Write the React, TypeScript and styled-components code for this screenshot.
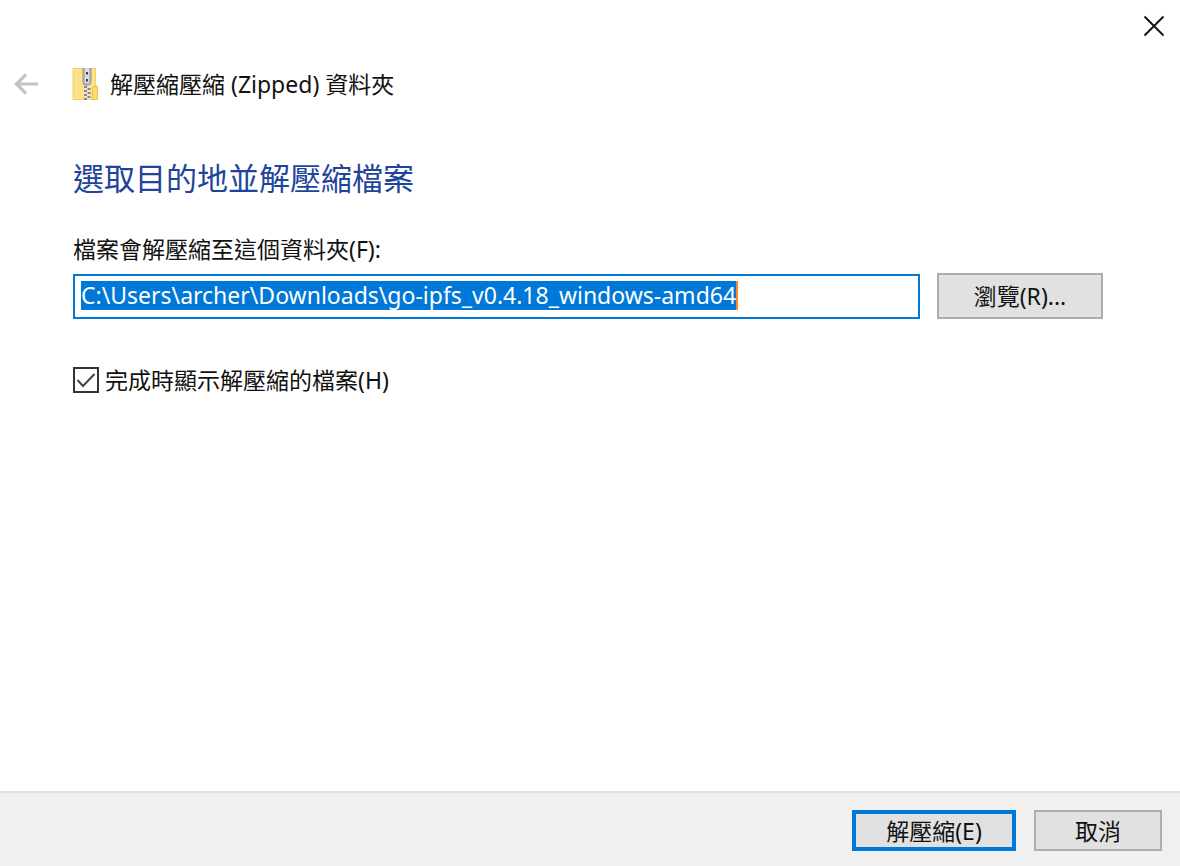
import React, { useEffect, useRef, useState } from "react";
import styled, { createGlobalStyle } from "styled-components";

const GlobalStyle = createGlobalStyle`
  *, *::before, *::after { box-sizing: border-box; }
  body {
    margin: 0;
    background: #fff;
    color: #111;
    font-family: "Noto Sans", "Noto Sans CJK TC", sans-serif;
    font-size: 23px;
    line-height: 30px;
  }
  button, input { font: inherit; color: inherit; }
`;

const Dialog = styled.div`
  display: flex;
  flex-direction: column;
  min-height: 100vh;
`;

const TitleBar = styled.div`
  display: flex;
  justify-content: flex-end;
  padding: 10px 10px 0 0;
`;

const IconButton = styled.button`
  display: flex;
  align-items: center;
  justify-content: center;
  width: 32px;
  height: 32px;
  padding: 0;
  border: 0;
  background: transparent;
`;

const Header = styled.header`
  display: flex;
  align-items: center;
  padding: 26px 77px 0 10px;
`;

const FolderIcon = styled.svg`
  margin: 0 12px 0 30px;
`;

const WizardName = styled.span`
  white-space: nowrap;
`;

const Content = styled.main`
  flex: 1;
  padding: 57px 77px 40px 73px;
`;

const Heading = styled.h1`
  margin: 0;
  color: #1f449c;
  font-size: 31px;
  font-weight: 400;
  line-height: 42px;
`;

const FieldLabel = styled.label`
  display: block;
  margin-top: 35px;
`;

const FieldRow = styled.div`
  display: flex;
  align-items: center;
  gap: 17px;
  margin-top: 9px;
`;

const PathFrame = styled.div`
  display: flex;
  align-items: center;
  flex: 1;
  min-width: 0;
  height: 45px;
  padding: 0 6px 2px;
  border: 2px solid #0078d7;
`;

const PathInput = styled.input`
  field-sizing: content;
  max-width: 100%;
  height: 29px;
  padding: 0;
  border: 0;
  border-right: 2px solid #ff8728;
  outline: 0;
  background: #fff;
  font-size: 23px;
  line-height: 29px;
  &::selection { background: #0078d7; color: #fff; }
`;

const Button = styled.button<{ $width: number; $height: number; $primary?: boolean }>`
  width: ${(p) => p.$width}px;
  height: ${(p) => p.$height}px;
  padding: 0;
  border: ${(p) => (p.$primary ? "4px solid #0078d7" : "2px solid #adadad")};
  background: #e1e1e1;
  white-space: nowrap;
`;

const CheckRow = styled.label`
  display: flex;
  align-items: center;
  gap: 6px;
  width: fit-content;
  margin-top: 46px;
`;

const CheckBox = styled.input`
  appearance: none;
  width: 26px;
  height: 26px;
  margin: 0;
  border: 2px solid #333;
  background: #fff;
  &:checked {
    background: #fff
      url("data:image/svg+xml,%3Csvg xmlns='http://www.w3.org/2000/svg' viewBox='0 0 22 22'%3E%3Cpath d='M2.5 11 8 17 19.5 5' fill='none' stroke='%23444' stroke-width='2'/%3E%3C/svg%3E")
      center / 22px 22px no-repeat;
  }
`;

const Footer = styled.footer`
  display: flex;
  justify-content: flex-end;
  gap: 18px;
  padding: 17px 18px 15px;
  border-top: 2px solid #dfdfdf;
  background: #f0f0f0;
`;

function CloseIcon() {
  return (
    <svg width="22" height="22" viewBox="0 0 22 22" aria-hidden="true">
      <path d="M1.500 1.500 20.500 20.500M20.500 1.500 1.500 20.500" fill="none" stroke="#111" strokeWidth="1.900" />
    </svg>
  );
}

function BackIcon() {
  return (
    <svg width="26" height="24" viewBox="0 0 26 24" aria-hidden="true">
      <path d="M25 12H4M13 2.500 3.500 12l9.500 9.500" fill="none" stroke="#c3c3c3" strokeWidth="3.200" />
    </svg>
  );
}

function ZippedFolder() {
  return (
    <FolderIcon width="26" height="32" viewBox="0 0 26 32" aria-hidden="true">
      <path d="M1 .5H23.500V18H25.500V31.500H1Z" fill="#fce08a" stroke="#f0cf62" />
      <path d="M20.500 31V20.500Q20.500 18.500 22 18.500H24Q25.500 18.500 25.500 20.500V31.500H20.500" fill="#fbdb78" stroke="#e8c24a" />
      <path d="M12.500 16H18V32H12.500Z" fill="#ece7d8" />
      <path
        d="M12 19h3M15.500 21h3M12 23h3M15.500 25h3M12 27h3M15.500 29h3M12 31h3"
        stroke="#686a6c"
        strokeWidth="1.500"
      />
      <path d="M11 0H19V14Q19 17 16.500 17H13.500Q11 17 11 14Z" fill="#b5b6b7" stroke="#97989a" />
      <path d="M13 0H17V15H13Z" fill="#dcdddd" />
      <path d="M14 4h2v2.500h-2zM14 11h2v2.500h-2z" fill="#3e4144" />
    </FolderIcon>
  );
}

export default function App() {
  const [path, setPath] = useState("C:\\Users\\archer\\Downloads\\go-ipfs_v0.4.18_windows-amd64");
  const [showFiles, setShowFiles] = useState(true);
  const pathRef = useRef<HTMLInputElement>(null);

  useEffect(() => {
    pathRef.current?.focus();
    pathRef.current?.select();
  }, []);

  return (
    <Dialog>
      <GlobalStyle />
      <TitleBar>
        <IconButton type="button" aria-label="關閉">
          <CloseIcon />
        </IconButton>
      </TitleBar>
      <Header>
        <IconButton type="button" aria-label="上一步" disabled>
          <BackIcon />
        </IconButton>
        <ZippedFolder />
        <WizardName>解壓縮壓縮 (Zipped) 資料夾</WizardName>
      </Header>
      <Content>
        <Heading>選取目的地並解壓縮檔案</Heading>
        <FieldLabel htmlFor="destination">檔案會解壓縮至這個資料夾(F):</FieldLabel>
        <FieldRow>
          <PathFrame>
            <PathInput
              id="destination"
              ref={pathRef}
              type="text"
              spellCheck={false}
              value={path}
              onChange={(e) => setPath(e.target.value)}
            />
          </PathFrame>
          <Button type="button" $width={166} $height={46}>
            瀏覽(R)...
          </Button>
        </FieldRow>
        <CheckRow>
          <CheckBox type="checkbox" checked={showFiles} onChange={(e) => setShowFiles(e.target.checked)} />
          完成時顯示解壓縮的檔案(H)
        </CheckRow>
      </Content>
      <Footer>
        <Button type="button" $width={164} $height={41} $primary>
          解壓縮(E)
        </Button>
        <Button type="button" $width={128} $height={41}>
          取消
        </Button>
      </Footer>
    </Dialog>
  );
}
